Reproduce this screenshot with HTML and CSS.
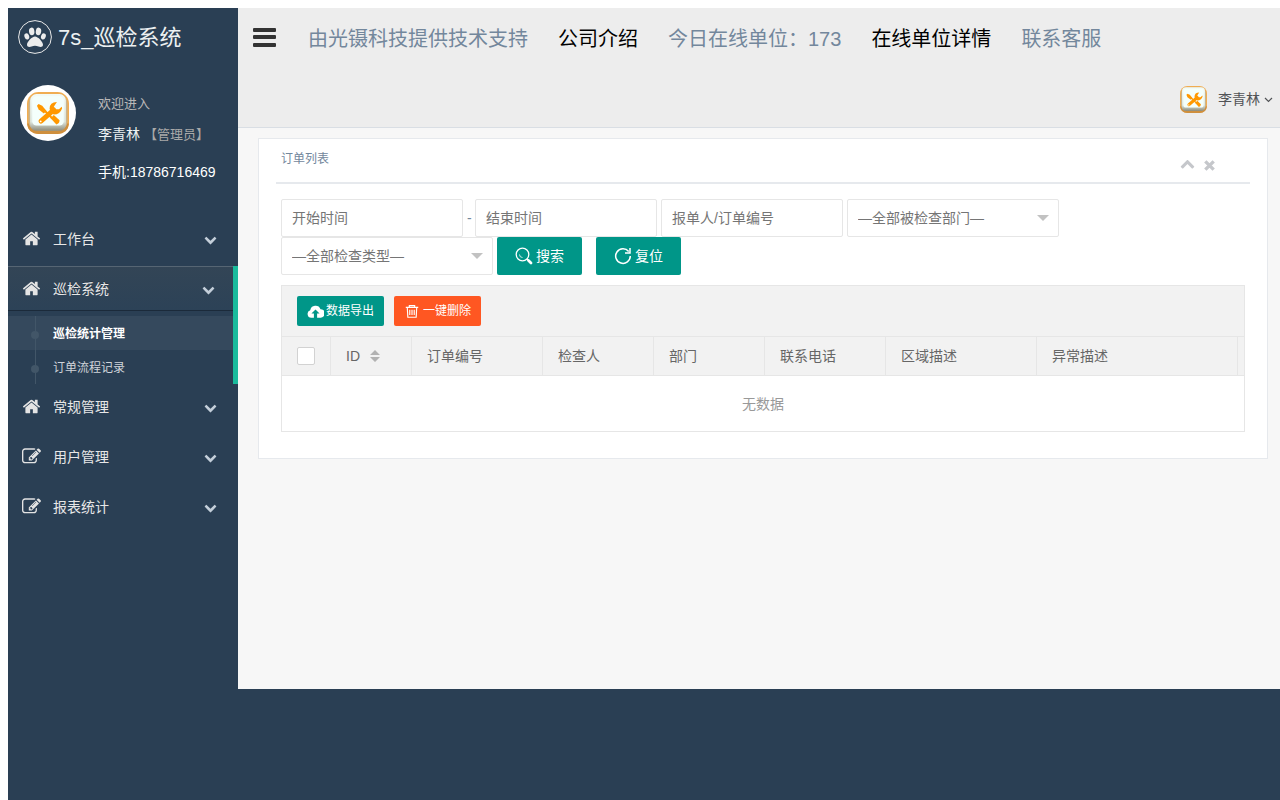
FILE: index.html
```
<!DOCTYPE html>
<html lang="zh-CN">
<head>
<meta charset="utf-8">
<title>7s_巡检系统</title>
<link rel="stylesheet" href="styles.css">
</head>
<body>
<svg class="sprite" aria-hidden="true">
  <linearGradient id="bevel" x1="0" y1="0" x2="0" y2="1"><stop offset="0" stop-color="#f3fbf6"/><stop offset=".75" stop-color="#dfe9e2"/><stop offset="1" stop-color="#8d8a78"/></linearGradient>
  <symbol id="home" viewBox="0 0 1792 1792"><path d="M1472 992v480q0 26-19 45t-45 19h-384v-384h-256v384h-384q-26 0-45-19t-19-45v-480q0-1 .5-3t.5-3l575-474 575 474q1 2 1 6zm223-69l-62 74q-8 9-21 11h-3q-13 0-21-7l-692-577-692 577q-12 8-24 7-13-2-21-11l-62-74q-8-10-7-23.5t11-21.5l719-599q32-26 76-26t76 26l244 204v-195q0-14 9-23t23-9h192q14 0 23 9t9 23v408l219 182q10 8 11 21.5t-7 23.5z"/></symbol>
  <symbol id="edit" viewBox="0 0 1792 1792"><path d="M888 1184l116-116-152-152-116 116v56h96v96h56zm440-720q-16-16-33 1l-350 350q-17 17-1 33t33-1l350-350q17-17 1-33zm80 594v190q0 119-84.5 203.5t-203.5 84.5h-832q-119 0-203.5-84.5t-84.5-203.5v-832q0-119 84.5-203.5t203.5-84.5h832q63 0 117 25 15 7 18 23 3 17-9 29l-49 49q-14 14-32 8-23-6-45-6h-832q-66 0-113 47t-47 113v832q0 66 47 113t113 47h832q66 0 113-47t47-113v-126q0-13 9-22l64-64q15-15 35-7t20 29zm-96-738l288 288-672 672h-288v-288zm444 132l-92 92-288-288 92-92q28-28 68-28t68 28l152 152q28 28 28 68t-28 68z"/></symbol>
  <symbol id="chevron" viewBox="0 0 1792 1792"><path d="M1683 808l-742 741q-19 19-45 19t-45-19l-742-741q-19-19-19-45.5t19-45.5l166-165q19-19 45-19t45 19l531 531 531-531q19-19 45-19t45 19l166 165q19 19 19 45.5t-19 45.5z"/></symbol>
  <symbol id="tools" viewBox="0 0 40 40">
    <rect width="40" height="40" rx="11" fill="#f0ad52"/>
    <path d="M0 30h40q-1 10-11 10H11Q1 40 0 30z" fill="#cf8f3d"/>
    <rect x="1.500" y="2" width="37" height="35" rx="9" fill="#c9b58e"/>
    <rect x="3" y="2" width="34" height="35" rx="6" fill="url(#bevel)"/>
    <rect x="5" y="4" width="30" height="28" rx="4" fill="#f4fffb"/>
    <path d="M11 11.500l3.500 1.500 4 5-2.500 2.500-5-4-1.500-3.500z" fill="#ff9800"/>
    <path d="M15 16L24 25" stroke="#ff9800" stroke-width="2"/>
    <path d="M22.500 25l3-3 5.500 5q0 3-3 4z" fill="#ff9800"/>
    <path d="M13.300 27.700L25.500 17" stroke="#ff9800" stroke-width="4.600" stroke-linecap="round"/>
    <path d="M28.500 9.500q-7 0-7 6.500l1 3 3 2.500q6 0 8-6l-.5-1.500-2.500 2.500-3.500 0-1.500-2.500z" fill="#ff9800"/>
    <circle cx="13" cy="28" r=".9" fill="#fff"/>
  </symbol>
</svg>
<div class="shell">
  <aside class="sidebar">
    <a class="brand" href="#">
      <svg class="brand-icon" viewBox="0 0 34 34" fill="#ececec"><circle cx="17" cy="17" r="16.4" fill="none" stroke="#eaeaea"/><ellipse cx="13.7" cy="11.4" rx="2.7" ry="3.8" transform="rotate(-8 13.7 11.4)"/><ellipse cx="20.5" cy="11.4" rx="2.7" ry="3.8" transform="rotate(8 20.5 11.4)"/><ellipse cx="8.8" cy="16.4" rx="2.3" ry="3.2" transform="rotate(-20 8.8 16.4)"/><ellipse cx="25.4" cy="16.4" rx="2.3" ry="3.2" transform="rotate(20 25.4 16.4)"/><path d="M17 16.6c3 0 8 5.400 8 8.200 0 2.600-3 2.400-4.500 1.700-2.400-1-4.600-1-7 0-1.500.7-4.500.9-4.500-1.700 0-2.800 5-8.200 8-8.200z"/></svg>
      <span>7s_巡检系统</span>
    </a>
    <section class="profile">
      <div class="avatar"><svg><use href="#tools"/></svg></div>
      <div class="profile-info">
        <p class="welcome">欢迎进入</p>
        <p class="name">李青林 <small>【管理员】</small></p>
        <p class="phone">手机:18786716469</p>
      </div>
    </section>
    <nav>
      <ul class="menu">
        <li><a href="#"><svg class="icon"><use href="#home"/></svg><span>工作台</span><svg class="arrow"><use href="#chevron"/></svg></a></li>
        <li class="active"><a href="#"><svg class="icon"><use href="#home"/></svg><span>巡检系统</span><svg class="arrow"><use href="#chevron"/></svg></a>
          <ul class="submenu">
            <li class="current"><a href="#">巡检统计管理</a></li>
            <li><a href="#">订单流程记录</a></li>
          </ul>
        </li>
        <li><a href="#"><svg class="icon"><use href="#home"/></svg><span>常规管理</span><svg class="arrow"><use href="#chevron"/></svg></a></li>
        <li><a href="#"><svg class="icon"><use href="#edit"/></svg><span>用户管理</span><svg class="arrow"><use href="#chevron"/></svg></a></li>
        <li><a href="#"><svg class="icon"><use href="#edit"/></svg><span>报表统计</span><svg class="arrow"><use href="#chevron"/></svg></a></li>
      </ul>
    </nav>
  </aside>
  <main class="main">
    <header class="topbar">
      <div class="topnav">
        <button class="toggle" type="button" aria-label="菜单"><svg viewBox="0 0 24 20" fill="#333"><rect x="1" y="0" width="23" height="4" rx="1"/><rect x="1" y="7" width="23" height="4" rx="1"/><rect x="1" y="15" width="23" height="4" rx="1"/></svg></button>
        <span>由光镊科技提供技术支持</span>
        <a href="#">公司介绍</a>
        <span>今日在线单位：173</span>
        <a href="#">在线单位详情</a>
        <span>联系客服</span>
      </div>
      <button class="user" type="button"><svg class="user-icon"><use href="#tools"/></svg><span>李青林</span><svg class="user-arrow" viewBox="0 0 9 9" fill="none" stroke="#515356" stroke-width="1.2"><path d="M1 3l3.500 3.500L8 3"/></svg></button>
    </header>
    <section class="panel">
      <div class="panel-head">
        <h2>订单列表</h2>
        <div class="panel-tools">
          <button type="button" aria-label="收起"><svg class="up"><use href="#chevron"/></svg></button>
          <button type="button" aria-label="关闭"><svg viewBox="0 0 14 14" fill="none" stroke="#c5c7cb" stroke-width="3.600"><path d="M2.500 2.500l9 9M11.500 2.500l-9 9"/></svg></button>
        </div>
      </div>
      <div class="panel-body">
        <form class="filters">
          <input type="text" placeholder="开始时间" aria-label="开始时间">
          <span class="dash">-</span>
          <input type="text" placeholder="结束时间" aria-label="结束时间">
          <input type="text" placeholder="报单人/订单编号" aria-label="报单人/订单编号">
          <div class="select"><select aria-label="被检查部门"><option>—全部被检查部门—</option></select></div>
          <div class="select"><select aria-label="检查类型"><option>—全部检查类型—</option></select></div>
          <div class="actions">
            <button class="btn" type="button"><svg viewBox="0 0 18 18" fill="none" stroke="#fff" stroke-width="1.300"><circle cx="7.500" cy="7.500" r="6.300"/><path d="M4.500 7.500a3 3 0 0 0 3 3" stroke-width=".8"/><path d="M12 12l1.500 1.500"/><path d="M13.500 13.500l2.500 2.500" stroke-width="2.800" stroke-linecap="round"/></svg>搜索</button>
            <button class="btn" type="button"><svg viewBox="0 0 18 18" fill="none" stroke="#fff" stroke-width="1.500"><path d="M14.700 4.500A7.300 7.300 0 1 0 16.300 9"/><path d="M16 1v5h-5"/></svg>复位</button>
          </div>
        </form>
        <div class="grid">
          <div class="toolbar">
            <button class="btn small" type="button"><svg viewBox="0 0 18 18"><path fill="#fff" d="M4.500 15.500A4 4 0 0 1 3.400 7.700 5.700 5.700 0 0 1 14.300 6.500a4.500 4.500 0 0 1 .2 9H10.700V11h2.600L9 6.800 4.700 11h2.600v4.500z"/></svg>数据导出</button>
            <button class="btn small danger" type="button"><svg viewBox="0 0 18 18" fill="none" stroke="#fff" stroke-width="1.300"><path d="M2 5h14M6 5V3h6v2M3.700 5l.6 11h9.400l.6-11M6.500 7.500v6M9 7.500v6M11.500 7.500v6"/></svg>一键删除</button>
          </div>
          <table>
            <colgroup><col class="c-check"><col class="c-id"><col class="c-no"><col class="c-mid"><col class="c-mid"><col class="c-tel"><col class="c-area"><col class="c-desc"><col></colgroup>
            <thead><tr><th><input type="checkbox" aria-label="全选"></th><th><span class="sort">ID<svg viewBox="0 0 10 12" fill="#b2b2b2"><path d="M0 5l5-5 5 5zM0 7h10l-5 5z"/></svg></span></th><th>订单编号</th><th>检查人</th><th>部门</th><th>联系电话</th><th>区域描述</th><th>异常描述</th><th></th></tr></thead>
            <tbody><tr><td colspan="9">无数据</td></tr></tbody>
          </table>
        </div>
      </div>
    </section>
  </main>
</div>
</body>
</html>
```
FILE: styles.css
```
* { box-sizing: border-box; }
body {
  margin: 0;
  padding: 8px 0 0 8px;
  background: #fff;
  color: #73879c;
  font: 14px/20px "Liberation Sans", "Noto Sans CJK SC", sans-serif;
}
button, input, select { font: inherit; color: inherit; margin: 0; }
button { border: 0; padding: 0; background: none; cursor: pointer; }
a { color: inherit; text-decoration: none; }
ul { list-style: none; margin: 0; padding: 0; }
p, h2 { margin: 0; font-weight: 400; }
svg { display: block; flex: none; }
.sprite { position: absolute; width: 0; height: 0; }

.shell {
  display: flex;
  align-items: flex-start;
  min-height: calc(100vh - 8px);
  background: #2a3f54;
}
.sidebar { flex: none; width: 230px; color: #e7e7e7; }
.brand {
  display: flex;
  align-items: center;
  gap: 6px;
  height: 58px;
  padding-left: 10px;
  color: #ecf0f1;
  font-size: 22px;
}
.brand span { padding-top: 2px; }
.brand-icon { width: 34px; height: 34px; }
.profile { display: flex; gap: 22px; padding: 19px 0 34px 12px; }
.avatar {
  display: grid;
  place-items: center;
  width: 56px;
  height: 56px;
  border-radius: 50%;
  background: #fff;
}
.avatar svg { width: 42px; height: 42px; }
.profile-info { padding-top: 8px; }
.welcome { font-size: 13px; line-height: 22px; color: #bab8b8; }
.name { margin-top: 9px; color: #ecf0f1; }
.name small { font-size: 13px; color: #a9a9a9; }
.phone { margin-top: 17px; color: #fff; }

.menu > li > a {
  display: flex;
  align-items: center;
  height: 44px;
  margin-bottom: 6px;
  padding: 0 21px 0 14px;
}
.menu .icon { width: 19px; height: 19px; fill: #e4e4e4; }
.menu > li > a span { flex: 1; margin-left: 12px; padding-top: 2px; }
.menu .arrow { width: 13px; height: 13px; margin-top: 2px; fill: #c4cfda; }
.menu > .active { border-right: 5px solid #1abb9c; }
.menu > .active > a {
  padding-right: 18px;
  background: linear-gradient(#334556, #2c4257);
  box-shadow: inset 0 1px #566573, 0 1px #1b2a3a;
  text-shadow: 0 -1px rgba(0, 0, 0, .25);
}
.submenu a {
  position: relative;
  display: block;
  height: 34px;
  padding: 8px 0 0 45px;
  font-size: 12px;
  color: #d0d5da;
}
.submenu .current a { background: #35495d; color: #fff; font-weight: 700; }
.submenu a::before {
  content: "";
  position: absolute;
  left: 27px;
  top: 0;
  bottom: 0;
  width: 1px;
  background: #425668;
}
.submenu a::after {
  content: "";
  position: absolute;
  left: 23px;
  top: 15px;
  width: 8px;
  height: 8px;
  border-radius: 50%;
  background: #425668;
}

.main { flex: 1; min-width: 0; min-height: calc(100vh - 119px); background: #f7f7f7; }
.topbar { border-bottom: 1px solid #d9dee4; background: #ededed; }
.topnav {
  display: flex;
  align-items: center;
  gap: 30px;
  height: 60px;
  padding-left: 14px;
  font-size: 20px;
  line-height: 30px;
  white-space: nowrap;
}
.topnav a, .topnav span { padding-top: 1px; }
.topnav a { color: #000; }
.toggle { margin-right: 2px; }
.toggle svg { width: 24px; height: 20px; }
.user {
  display: flex;
  align-items: center;
  height: 59px;
  margin-left: auto;
  padding: 3px 7px 0 0;
  color: #515356;
}
.user-icon { width: 27px; height: 27px; margin-right: 11px; }
.user-arrow { width: 9px; height: 9px; margin-left: 4px; }

.panel {
  margin: 10px 12px 0 20px;
  padding: 9px 17px 26px;
  border: 1px solid #e6e9ed;
  background: #fff;
}
.panel-head {
  display: flex;
  justify-content: space-between;
  height: 36px;
  padding: 0 34px 0 5px;
  border-bottom: 2px solid #e6e9ed;
}
.panel-head h2 { padding-top: 1px; font-size: 12px; }
.panel-tools { display: flex; gap: 8px; }
.panel-tools svg { width: 15px; height: 15px; fill: #c5c7cb; }
.panel-tools button:last-child svg { width: 13px; height: 13px; fill: none; }
.up { transform: rotate(180deg); }
.panel-body { padding: 15px 5px 0; }

.filters { display: flex; flex-wrap: wrap; align-items: center; column-gap: 4px; }
.filters input, .filters select {
  height: 38px;
  padding: 0 10px;
  border: 1px solid #e6e6e6;
  border-radius: 2px;
  background: #fff;
  color: #757575;
}
.filters input { width: 182px; }
.filters input::placeholder { color: #757575; opacity: 1; }
.dash { width: 4px; }
.select { position: relative; }
.select select { display: block; width: 212px; appearance: none; }
.select::after {
  content: "";
  position: absolute;
  right: 10px;
  top: 16px;
  border: 6px solid transparent;
  border-top-color: #c2c2c2;
  border-bottom: 0;
}
.actions { display: flex; gap: 14px; }
.btn {
  display: flex;
  align-items: center;
  gap: 3px;
  height: 38px;
  padding: 0 18px;
  border-radius: 2px;
  background: #009688;
  color: #fff;
}
.btn svg { width: 18px; height: 18px; }
.btn.small { height: 30px; padding: 0 10px; font-size: 12px; gap: 2px; }
.btn.small svg { width: 17px; height: 17px; }
.btn.danger { background: #ff5722; }
.btn.danger svg { width: 16px; height: 16px; margin-right: 1px; }

.grid { margin-top: 10px; border: 1px solid #e6e6e6; overflow: hidden; }
.toolbar { display: flex; gap: 10px; padding: 10px 15px; background: #f2f2f2; }
table { width: 100%; table-layout: fixed; border-collapse: separate; border-spacing: 0; }
th {
  height: 40px;
  padding: 0 15px;
  border: solid #e6e6e6;
  border-width: 1px 1px 1px 0;
  background: #f2f2f2;
  color: #666;
  font-weight: 400;
  text-align: left;
  white-space: nowrap;
}
th:last-child { padding: 0; border-right: 0; }
td { height: 55px; padding: 0; color: #999; text-align: center; }
.c-check { width: 49px; }
.c-id { width: 81px; }
.c-no { width: 131px; }
.c-mid { width: 111px; }
.c-tel { width: 121px; }
.c-area { width: 151px; }
.c-desc { width: 201px; }
th input {
  display: block;
  appearance: none;
  width: 18px;
  height: 18px;
  border: 1px solid #d2d2d2;
  border-radius: 2px;
  background: #fff;
}
.sort { display: flex; align-items: center; gap: 10px; }
.sort svg { width: 10px; height: 12px; }
```
